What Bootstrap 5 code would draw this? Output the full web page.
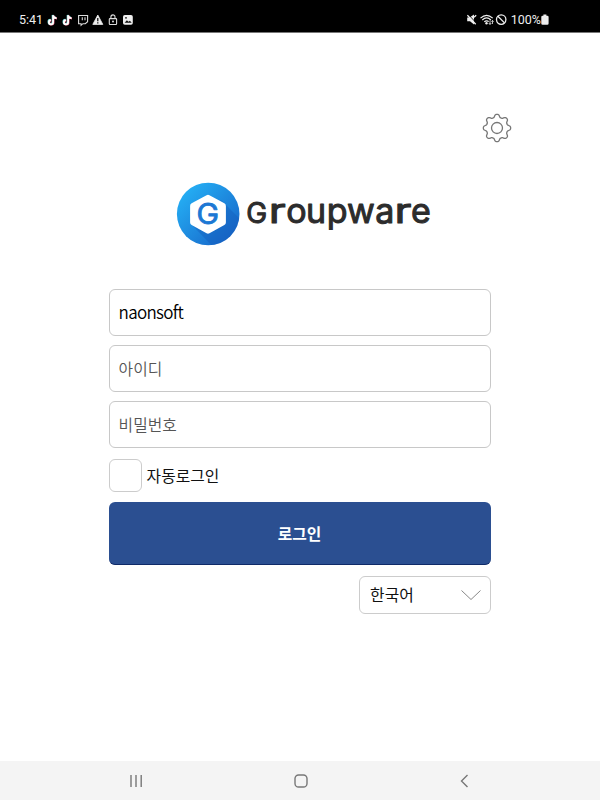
<!DOCTYPE html>
<html lang="ko">
<head>
    <meta charset="UTF-8">
    <meta name="viewport" content="width=device-width, initial-scale=1.0">
    <title>Groupware</title>
    <link href="https://cdn.jsdelivr.net/npm/bootstrap@5.3.2/dist/css/bootstrap.min.css" rel="stylesheet">
    <style>
        body {
            height: 800px;
            overflow: hidden;
            background: #fff;
            color: #111;
            font-family: "Noto Sans CJK KR", sans-serif;
        }
        svg { display: block; flex: none; }
        .status-bar {
            height: 33px;
            padding: 6px 51px 0 19px;
            background: #000;
            border-bottom: 1px solid #777;
            color: #eee;
            font: 12.5px/1 Roboto, sans-serif;
        }
        .clock { padding-top: 8px; }
        .settings-row { padding: 80px 88.5px 0 0; }
        .settings-btn { width: 30px; height: 30px; }
        .brand-row { padding: 39px 0 0 176px; }
        .wordmark {
            fill: #2c2c2c;
            stroke: #2c2c2c;
            stroke-width: 1;
            stroke-linejoin: round;
            font: 400 34px Inter, sans-serif;
        }
        .wordmark .cap { font-size: 28px; }
        .login-form { width: 382px; margin: 43px 0 0 108.6px; }
        .login-form .form-control {
            height: 47px;
            margin-bottom: 9px;
            padding: 0 9px;
            border: 1px solid #c8c8c8;
            border-radius: 6px;
            color: #111;
            font-size: 15.8px;
            font-weight: 350;
        }
        .login-form .form-control::placeholder { color: #555; opacity: 1; }
        .login-form .company { padding-bottom: 2px; color: #000; font-size: 17px; letter-spacing: -.7px; }
        .auto-login { height: 33px; margin-top: 11px; padding: 0; }
        .auto-login .form-check-input {
            width: 33px;
            height: 33px;
            margin: 0;
            border: 1px solid #ccc;
            border-radius: 6px;
        }
        .auto-login label { margin-left: 5px; font-size: 15.8px; line-height: 33px; }
        .login-btn {
            height: 63px;
            margin-top: 8px;
            padding: 1px 0 0;
            background: #2b4f91;
            border: 0;
            border-bottom: 1px solid #0f2a68;
            border-radius: 6px;
            color: #fff;
            font-size: 15.8px;
            font-weight: 700;
        }
        .lang-select {
            width: 132px;
            height: 38px;
            margin-top: 11px;
            padding: 0 9px 0 10.5px;
            background: #fff;
            border: 1px solid #ccc;
            border-radius: 6px;
            color: #111;
            font-size: 15.8px;
        }
        .nav-keys { height: 39px; padding: 0 129px 0 128px; background: #f4f4f4; }
    </style>
</head>
<body class="d-flex flex-column">
    <header class="status-bar d-flex justify-content-between">
        <div class="d-flex">
            <span class="clock">5:41</span>
            <svg width="90" height="26" viewBox="43 6 90 26">
                <defs>
                    <path id="note" d="M53.1 15.3v6.9a2.1 2.1 0 1 1-2.2-2.1M53.1 15.3c.3 1.8 1.5 2.7 3.4 2.8" fill="none" stroke-width="1.8"/>
                </defs>
                <g id="tiktok">
                    <use href="#note" x="-.5" y="-.4" stroke="#62dcd9"/>
                    <use href="#note" x=".5" y=".4" stroke="#e86684"/>
                    <use href="#note" stroke="#fff"/>
                </g>
                <use href="#tiktok" x="15"/>
                <path d="M78.6 15.5h9v6.2l-2.3 2h-2.4l-1.8 1.6v-1.6h-2.5z" fill="none" stroke="#ddd" stroke-width="1.1"/>
                <path d="M82.3 17.3v3M85 17.3v3" stroke="#ddd" stroke-width="1.1"/>
                <path d="M97.8 15l5 9.4h-10z" fill="#eee" stroke="#eee" stroke-width=".8" stroke-linejoin="round"/>
                <path d="M97.8 18v3.2M97.8 22.2v1.2" stroke="#000" stroke-width="1.2"/>
                <rect x="109.3" y="18.6" width="7.3" height="5.9" rx=".7" fill="none" stroke="#ddd" stroke-width="1.1"/>
                <path d="M110.9 18.5v-1.6a2 2 0 0 1 4.1 0v1.6" fill="none" stroke="#ddd" stroke-width="1.1"/>
                <circle cx="113" cy="21.5" r="1" fill="#ddd"/>
                <rect x="123" y="15" width="9.8" height="9.8" rx="1.8" fill="#eee"/>
                <path d="M124.6 22.8l2.3-2.6 1.6 1.6 1.4-1.1 1.8 2.1z" fill="#111"/>
                <circle cx="126" cy="17.8" r=".9" fill="#111"/>
            </svg>
        </div>
        <div class="d-flex">
            <svg width="44" height="26" viewBox="467 6 44 26">
                <path d="M467.2 17.6h2.3l4.5-3.1v9.9l-4-3.2h-2.8z" fill="#eee"/>
                <path d="M468.2 14.5l8.6 9" stroke="#000" stroke-width="1"/>
                <path d="M467.4 15.2l8.3 9.1M476.2 15.2l-2.2 2" stroke="#eee" stroke-width="1.3"/>
                <path d="M480.5 18.1c3.8-3.5 8.4-3.5 12.2 0M482.3 20c2.6-2.5 6-2.5 8.6 0M484.3 21.9c1.4-1.4 3.2-1.4 4.4-.2" fill="none" stroke="#eee" stroke-width="1.2"/>
                <circle cx="486.5" cy="23.3" r="1.2" fill="#eee"/>
                <path d="M490 20.5v3.8M488.7 23l1.3 1.5 1.3-1.5M492.5 24v-3.5M491.4 21.7l1.1-1.3 1.2 1.3" fill="none" stroke="#eee" stroke-width=".8"/>
                <circle cx="501.2" cy="19.6" r="4.7" fill="none" stroke="#eee" stroke-width="1.3"/>
                <path d="M497.9 16.3l6.6 6.6" stroke="#eee" stroke-width="1.3"/>
            </svg>
            <span class="clock">100%</span>
            <svg width="8" height="26" viewBox="541 6 8 26">
                <path d="M543.4 14.6h3v1.2h.9q1.3 0 1.3 1.3v6.3q0 1.3-1.3 1.3h-4.7q-1.3 0-1.3-1.3v-6.3q0-1.3 1.3-1.3h.8z" fill="#eee"/>
            </svg>
        </div>
    </header>

    <main class="flex-grow-1">
        <div class="settings-row d-flex justify-content-end">
            <button type="button" class="settings-btn btn border-0 p-0" aria-label="설정">
                <svg width="30" height="30" viewBox="-15 -15 30 30" fill="none" stroke="#777" stroke-width="1.3">
                    <path id="gearOutline" stroke-linejoin="round"/>
                    <circle r="5.5"/>
                </svg>
            </button>
        </div>

        <div class="brand-row">
            <svg width="260" height="64" viewBox="176 182 260 64" role="img" aria-label="Groupware">
                <defs>
                    <linearGradient id="disc" x1="0" y1="0" x2="1" y2="1">
                        <stop offset=".1" stop-color="#25b0f5"/>
                        <stop offset=".9" stop-color="#1766c9"/>
                    </linearGradient>
                    <clipPath id="discClip"><circle cx="208.2" cy="214" r="31.3"/></clipPath>
                </defs>
                <circle cx="208.2" cy="214" r="31.3" fill="url(#disc)"/>
                <path d="M193 226l28-26 30 30-25 30z" fill="#1459b8" opacity=".4" clip-path="url(#discClip)"/>
                <path d="M208 197.8l14.9 8.2v16.4l-14.9 8.2-14.9-8.2V206z" fill="#fff" stroke="#fff" stroke-width="6" stroke-linejoin="round"/>
                <text x="196.4" y="224.2" font-family="Inter" font-size="28" font-weight="400" fill="#1c78d4" stroke="#1c78d4" stroke-width=".8" stroke-linejoin="round" textLength="22.5" lengthAdjust="spacingAndGlyphs">G</text>
                <text class="wordmark" y="222.7"><tspan class="cap" x="246.3">G</tspan><tspan x="268.8" textLength="17" lengthAdjust="spacingAndGlyphs">r</tspan><tspan x="286.2 306 326.7 347 375.2">oupwa</tspan><tspan x="394.6" textLength="17" lengthAdjust="spacingAndGlyphs">r</tspan><tspan x="411">e</tspan></text>
            </svg>
        </div>

        <form class="login-form">
            <input type="text" class="form-control company" value="naonsoft" aria-label="회사">
            <input type="text" class="form-control" placeholder="아이디">
            <input type="password" class="form-control" placeholder="비밀번호">
            <div class="auto-login form-check d-flex">
                <input class="form-check-input" type="checkbox" id="autoLogin">
                <label for="autoLogin">자동로그인</label>
            </div>
            <button type="submit" class="login-btn btn w-100">로그인</button>
            <button type="button" class="lang-select d-flex align-items-center justify-content-between ms-auto">
                <span>한국어</span>
                <svg width="20" height="12" fill="none" stroke="#888"><path d="M.5 1.5l9.5 9 9.5-9"/></svg>
            </button>
        </form>
    </main>

    <footer class="nav-keys d-flex align-items-center justify-content-between">
        <svg width="16" height="16" stroke="#777" stroke-width="1.4"><path d="M3 2v12M8 2v12M13.2 2v12"/></svg>
        <svg width="16" height="16" fill="none" stroke="#777" stroke-width="1.4"><rect x="2" y="2" width="12" height="12" rx="3.6"/></svg>
        <svg width="14" height="16" fill="none" stroke="#777" stroke-width="1.4"><path d="M10.5 2l-6 6 6 6"/></svg>
    </footer>

    <script src="https://cdn.jsdelivr.net/npm/bootstrap@5.3.2/dist/js/bootstrap.bundle.min.js"></script>
    <script>
        // eight rounded teeth around the hub
        let d = '';
        for (let i = 0; i < 360; i += 3) {
            const a = i * Math.PI / 180;
            const r = 12.2 + 1.6 * Math.tanh(1.5 * Math.cos(8 * a));
            d += (i ? 'L' : 'M') + (r * Math.cos(a)).toFixed(2) + ' ' + (r * Math.sin(a)).toFixed(2);
        }
        document.getElementById('gearOutline').setAttribute('d', d + 'Z');
    </script>
</body>
</html>
